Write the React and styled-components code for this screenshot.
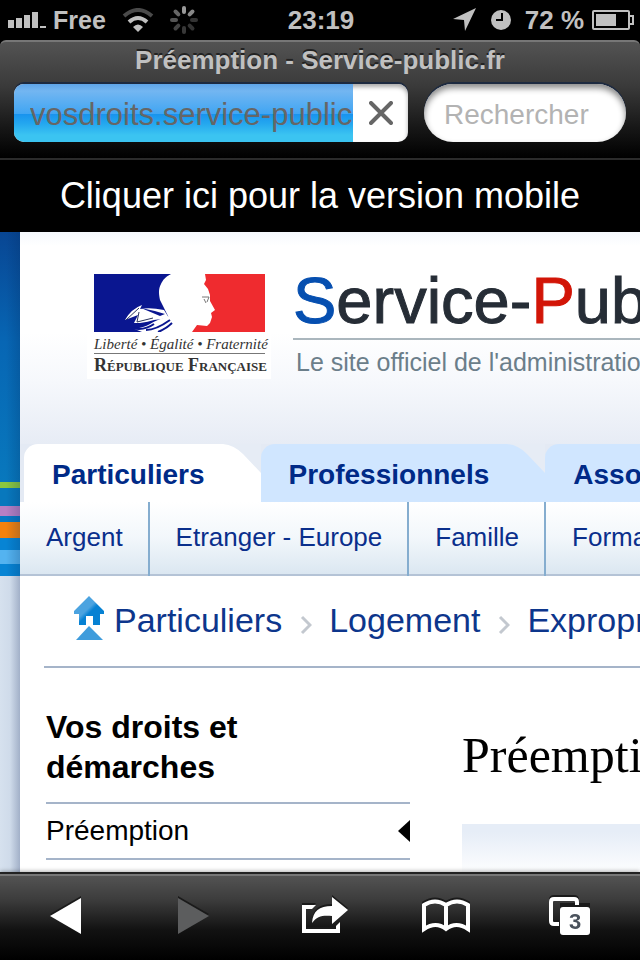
import React from 'react';
import styled, { createGlobalStyle } from 'styled-components';

const sans = '"Liberation Sans", Arial, sans-serif';
const serif = '"Liberation Serif", Georgia, serif';

const GlobalStyle = createGlobalStyle`
  * { box-sizing: border-box; }
  body { margin: 0; background: #000; font-family: ${sans}; }
  a { color: inherit; text-decoration: none; }
  button { border: 0; padding: 0; background: none; font: inherit; cursor: pointer; }
  h1, h2, p { margin: 0; }
  svg { display: block; flex: none; }
`;

const Screen = styled.div`
  display: flex;
  flex-direction: column;
  height: 100vh;
  overflow: hidden;
`;

const StatusBar = styled.div`
  display: grid;
  grid-template-columns: 1fr auto 1fr;
  align-items: center;
  height: 40px;
  flex: none;
  padding: 0 6px 0 8px;
  background: #000;
  color: #c0c0c0;
  font-size: 26px;
  font-weight: bold;
`;

const StatusGroup = styled.div`
  display: flex;
  align-items: center;
  justify-content: ${(p) => (p.$end ? 'flex-end' : 'flex-start')};
  gap: ${(p) => (p.$end ? '8px' : '16px')};
`;

const Carrier = styled.div`
  display: flex;
  align-items: center;
  gap: 6px;
  font-size: 25px;
`;

const Chrome = styled.header`
  flex: none;
  height: 120px;
  border-top: 2px solid #777;
  border-bottom: 2px solid #2b2b2b;
  border-radius: 6px 6px 0 0;
  background: linear-gradient(#535353, #3a3a3a 38%, #161616 75%, #000);
`;

const PageTitle = styled.p`
  height: 42px;
  line-height: 36px;
  text-align: center;
  color: #c0c0c0;
  font-size: 26px;
  font-weight: bold;
  text-shadow: 0 -2px 0 #222;
  white-space: nowrap;
`;

const Fields = styled.div`
  display: flex;
  gap: 16px;
  padding: 0 14px;
`;

const AddressBox = styled.div`
  flex: 2 1 394px;
  display: flex;
  align-items: center;
  min-width: 0;
  height: 58px;
  overflow: hidden;
  border-radius: 10px;
  background: #fff;
  box-shadow: 0 -2px 0 #1d2a40, inset 0 3px 4px #aaa;
`;

const AddressInput = styled.input`
  flex: 1;
  min-width: 0;
  height: 58px;
  padding: 4px 0 0 16px;
  border: 0;
  border-radius: 0;
  outline: 0;
  color: #666;
  font: 31px ${sans};
  background: linear-gradient(#5ea4e8, #73b6f1 12%, #3fa5f3 52%, #1893ee 52%, #24a7ef 68%, #3bc4f1 88%, #3bc4f1);
`;

const StopButton = styled.button`
  display: flex;
  align-items: center;
  justify-content: center;
  width: 55px;
  height: 58px;
`;

const SearchInput = styled.input`
  flex: 1 1 202px;
  min-width: 0;
  height: 58px;
  padding: 4px 20px 0;
  border: 0;
  border-radius: 29px;
  outline: 0;
  background: #fff;
  box-shadow: 0 -2px 0 #1d2a40, inset 0 4px 6px #888;
  font: 28px ${sans};
  &::placeholder { color: #b3b3b3; opacity: 1; }
`;

const MobileBanner = styled.a`
  flex: none;
  height: 72px;
  line-height: 72px;
  background: #000;
  color: #fff !important;
  font-size: 36px;
  text-align: center;
  white-space: nowrap;
`;

const Viewport = styled.div`
  flex: 1;
  min-height: 0;
  display: flex;
  overflow: hidden;
  background: #fff;
`;

const Margin = styled.div`
  flex: none;
  width: 20px;
  display: flex;
  flex-direction: column;
`;

const Stripes = styled.div`
  flex: none;
  height: 344px;
  background:
    linear-gradient(90deg, transparent 30%, rgba(0, 40, 90, 0.22)),
    linear-gradient(
      #084693 0, #0766b4 110px, #0878bd 250px,
      #8cc83f 250px, #8cc83f 256px, #0878bd 256px, #0878bd 274px,
      #b87fc4 274px, #b87fc4 284px, #0878c4 284px, #0878c4 290px,
      #f5820c 290px, #f5820c 306px, #0784d4 306px, #0784d4 318px,
      #54b3f0 318px, #54b3f0 332px, #0784d4 332px
    );
`;

const MarginFoot = styled.div`
  flex: 1;
  background: linear-gradient(90deg, #d6e1ee, #cfdbea 50%, #a2b0c8);
`;

const Site = styled.div`
  flex: 1;
  min-width: 0;
  overflow: hidden;
`;

const SiteHeader = styled.div`
  height: 212px;
  padding: 38px 0 0 67px;
  display: flex;
  align-items: flex-start;
  background: linear-gradient(#f5f8fd, #fff 14px, #fff 100px, #f6f8fc 150px, #e7ecf5 212px);
`;

const Republic = styled.a`
  flex: none;
  width: 184px;
  height: 109px;
  padding: 4px 6px 0 7px;
  background: #fff;
  font-family: ${serif};
  white-space: nowrap;
`;

const Motto = styled.span`
  display: block;
  height: 22px;
  line-height: 24px;
  border-bottom: 1px solid #777;
  color: #333;
  font-size: 15px;
  font-style: italic;
`;

const RepublicName = styled.span`
  display: block;
  line-height: 22px;
  color: #333;
  font-size: 18px;
  font-weight: bold;
  font-variant: small-caps;
`;

const Brand = styled.a`
  flex: none;
  margin-left: 22px;
  white-space: nowrap;
`;

const BrandName = styled.span`
  display: block;
  height: 70px;
  line-height: 62px;
  border-bottom: 2px solid #aab6bd;
  color: #262d36;
  font-size: 65px;
  -webkit-text-stroke: 1px currentColor;
`;

const Initial = styled.span`
  color: ${(p) => p.$color};
`;

const Tagline = styled.span`
  display: block;
  padding-left: 3px;
  line-height: 44px;
  color: #6b7e8a;
  font-size: 25px;
`;

const Tabs = styled.nav`
  display: flex;
  height: 58px;
  padding-left: 4px;
  background: #e4eaf4;
`;

const Tab = styled.a`
  flex: none;
  display: flex;
  height: 58px;
  line-height: 62px;
  padding-left: 28px;
  border-radius: 14px 0 0 0;
  background: ${(p) => (p.$active ? '#fff' : '#d0e6ff')};
  color: #002a87 !important;
  font-size: 28px;
  font-weight: bold;
`;

const TabEdge = styled.svg`
  width: 56px;
  height: 58px;
`;

const SubNav = styled.nav`
  display: flex;
  height: 74px;
  border-bottom: 2px solid #b4c3d6;
  background: linear-gradient(#fff, #f2f7fb 50%, #dbe7f1);
`;

const SubLink = styled.a`
  flex: none;
  height: 74px;
  line-height: 70px;
  padding: 0 25px 0 26px;
  border-right: 2px solid #85adcf;
  color: #0a2f8c !important;
  font-size: 26px;
  white-space: nowrap;
`;

const Breadcrumb = styled.nav`
  display: flex;
  align-items: center;
  height: 92px;
  margin-left: 24px;
  padding: 0 0 2px 30px;
  border-bottom: 2px solid #a5b4c9;
  color: #0d368c;
  font-size: 34px;
  white-space: nowrap;
`;

const Crumb = styled.a`
  flex: none;
  padding-left: ${(p) => (p.$first ? '9px' : '0')};
`;

const Chevron = styled.svg`
  margin: 10px 17px 0 18px;
  width: 12px;
  height: 20px;
`;

const HomeIcon = styled.svg`
  align-self: flex-start;
  margin-top: 20px;
`;

const Columns = styled.div`
  display: flex;
  padding-left: 26px;
`;

const Sidebar = styled.aside`
  flex: none;
  width: 364px;
  padding-top: 39px;
`;

const SideTitle = styled.h2`
  width: 240px;
  padding-bottom: 15px;
  line-height: 40px;
  font-size: 32px;
`;

const SideItem = styled.a`
  display: flex;
  align-items: center;
  justify-content: space-between;
  height: 56px;
  border-top: 2px solid #a5b4c9;
  font-size: 28px;
`;

const SideEnd = styled.div`
  border-top: 2px solid #a5b4c9;
`;

const Article = styled.main`
  flex: 1;
  min-width: 0;
  margin-left: 52px;
  padding-top: 58px;
  overflow: hidden;
`;

const ArticleTitle = styled.h1`
  height: 98px;
  line-height: 58px;
  font-family: ${serif};
  font-size: 50px;
  font-weight: normal;
  white-space: nowrap;
`;

const Summary = styled.div`
  height: 80px;
  background: linear-gradient(#e6edf7 8px, #fff 52px);
`;

const Toolbar = styled.footer`
  flex: none;
  display: grid;
  grid-template-columns: 129fr 129fr 134fr 108fr 140fr;
  align-items: center;
  justify-items: center;
  height: 88px;
  padding-bottom: 2px;
  border-top: 2px solid #222;
  background: linear-gradient(#777 2px, #535353 2px, #3c3c3c 30%, #121212 65%, #000);
  box-shadow: 0 -1px 4px rgba(0, 0, 0, 0.3);
  z-index: 1;
`;

const ToolButton = styled.button`
  display: flex;
  filter: drop-shadow(0 -2px 0 #1a1a1a);
`;

const PagesBadge = styled.text`
  font: bold 22px ${sans};
  fill: #4a525c;
`;

const tabs = ['Particuliers', 'Professionnels', 'Associations'];
const themes = ['Argent', 'Etranger - Europe', 'Famille', 'Formation - Travail'];
const crumbs = ['Particuliers', 'Logement', 'Expropriation'];

function Signal() {
  return (
    <svg width="39" height="18" fill="#c0c0c0" aria-hidden="true">
      <rect x="0" y="9" width="6" height="8" />
      <rect x="8" y="7" width="6" height="10" />
      <rect x="16" y="4" width="6" height="13" />
      <rect x="24" y="1" width="6" height="16" />
      <rect x="32" y="15" width="6" height="2" />
    </svg>
  );
}

function Wifi() {
  return (
    <svg width="32" height="24" viewBox="0 0 32 24" fill="none" aria-hidden="true">
      <path d="M2 8Q16 -4 30 8" stroke="#4a4a4a" strokeWidth="4" />
      <path d="M7 14Q16 6 25 14" stroke="#c0c0c0" strokeWidth="4" />
      <path d="M11 19Q16 14 21 19L16 24Z" fill="#c0c0c0" />
    </svg>
  );
}

function Spinner() {
  const shades = ['#999', '#888', '#333', '#333', '#383838', '#444', '#555', '#666'];
  return (
    <svg width="28" height="28" viewBox="-14 -14 28 28" aria-label="Chargement">
      {shades.map((c, i) => (
        <line key={i} x1="0" y1="-8" x2="0" y2="-12" stroke={c} strokeWidth="4" strokeLinecap="round" transform={`rotate(${i * 45})`} />
      ))}
    </svg>
  );
}

function Marianne() {
  return (
    <svg width="171" height="58" viewBox="0 0 171 58" aria-label="Marianne">
      <rect width="171" height="58" fill="#fff" />
      <path d="M0 0H77C71 3 69 6 67 10C64 15 65 21 66 26L70 34L73 40L78 50L72 58H0Z" fill="#0a1690" />
      <path d="M111 0L112 6L110 10L114 15L116 21L116 27L121 36L117 39L118 43L116 49L113 52L103 51L98 58H171V0Z" fill="#ef2b2f" />
      <path d="M31 46Q37 35 48 31L46 35Q56 33 70 36L75 44L60 46Q54 48 46 49L40 49L44 41Z" fill="#fff" />
      <path d="M47 34L66 42L71 40Q58 36 47 34Z" fill="#0a1690" />
      <path d="M32 46L45 34M45 38L43 48L59 44" fill="none" stroke="#29335c" strokeWidth="1" />
      <path d="M38 54Q48 55 56 50T76 42L80 58H48Z" fill="#fff" />
      <path d="M38 54Q50 57 60 50M52 56Q62 56 76 46M64 58Q72 55 78 49" fill="none" stroke="#0a1690" strokeWidth="2" />
      <path d="M108 23H115L113 28M110 25L112 29" fill="none" stroke="#777" strokeWidth="1" />
    </svg>
  );
}

function Home() {
  return (
    <HomeIcon width="31" height="44" viewBox="0 0 31 44" aria-hidden="true">
      <defs>
        <linearGradient id="roof" x1="0" y1="0" x2="1" y2="1">
          <stop offset="45%" stopColor="#4ba3e0" />
          <stop offset="55%" stopColor="#0681d3" />
        </linearGradient>
      </defs>
      <path d="M15 0L30 15V18H26V29H19V20H12V29H5V18H0V15Z" fill="url(#roof)" />
      <path d="M15 30L29 44H2Z" fill="#3f9cdc" />
    </HomeIcon>
  );
}

export default function App() {
  return (
    <Screen>
      <GlobalStyle />
      <StatusBar>
        <StatusGroup>
          <Carrier><Signal />Free</Carrier>
          <Wifi />
          <Spinner />
        </StatusGroup>
        <span>23:19</span>
        <StatusGroup $end>
          <svg width="24" height="24" viewBox="0 0 24 24" fill="#c0c0c0" aria-hidden="true"><path d="M23 0L12 23L11 12L0 11Z" /></svg>
          <svg width="32" height="20" viewBox="-6 0 32 20" aria-hidden="true">
            <circle cx="10" cy="10" r="10" fill="#c0c0c0" />
            <path d="M11 3V10H5" fill="none" stroke="#000" strokeWidth="2" />
          </svg>
          <span>72 %</span>
          <svg width="42" height="20" viewBox="0 0 42 20" fill="none" stroke="#c0c0c0" strokeWidth="2" aria-label="Batterie">
            <rect x="1" y="1" width="36" height="18" rx="1" />
            <path d="M38 6H41V14H38" />
            <rect x="4" y="4" width="20" height="12" fill="#c0c0c0" stroke="none" />
          </svg>
        </StatusGroup>
      </StatusBar>

      <Chrome>
        <PageTitle>Préemption - Service-public.fr</PageTitle>
        <Fields>
          <AddressBox>
            <AddressInput aria-label="Adresse" defaultValue="vosdroits.service-public.fr" />
            <StopButton aria-label="Arrêter">
              <svg width="24" height="24" viewBox="0 0 24 24" stroke="#666" strokeWidth="4" strokeLinecap="round"><path d="M2 2L22 22M22 2L2 22" /></svg>
            </StopButton>
          </AddressBox>
          <SearchInput aria-label="Rechercher" placeholder="Rechercher" />
        </Fields>
      </Chrome>

      <MobileBanner href="#mobile">Cliquer ici pour la version mobile</MobileBanner>

      <Viewport>
        <Margin><Stripes /><MarginFoot /></Margin>
        <Site>
          <SiteHeader>
            <Republic href="#republique">
              <Marianne />
              <Motto>Liberté • Égalité • Fraternité</Motto>
              <RepublicName>République Française</RepublicName>
            </Republic>
            <Brand href="#accueil">
              <BrandName><Initial $color="#064fb0">S</Initial>ervice-<Initial $color="#d21507">P</Initial>ublic.fr</BrandName>
              <Tagline>Le site officiel de l'administration française</Tagline>
            </Brand>
          </SiteHeader>
          <Tabs aria-label="Publics">
            {tabs.map((name, i) => (
              <Tab key={name} href={`#${name}`} $active={i === 0}>
                {name}
                <TabEdge viewBox="0 0 56 58" aria-hidden="true"><path d="M18 0H57V30L38 10Q29 1 18 0Z" fill="#e6ecf5" /></TabEdge>
              </Tab>
            ))}
          </Tabs>
          <SubNav aria-label="Thèmes">
            {themes.map((name) => <SubLink key={name} href={`#${name}`}>{name}</SubLink>)}
          </SubNav>
          <Breadcrumb aria-label="Fil d'Ariane">
            <Home />
            {crumbs.map((name, i) => (
              <React.Fragment key={name}>
                {i > 0 && <Chevron viewBox="0 0 12 20" fill="none" stroke="#c3c8cf" strokeWidth="3"><path d="M2 2L10 10L2 18" /></Chevron>}
                <Crumb href={`#${name}`} $first={i === 0}>{name}</Crumb>
              </React.Fragment>
            ))}
          </Breadcrumb>
          <Columns>
            <Sidebar>
              <SideTitle>Vos droits et démarches</SideTitle>
              <SideItem href="#preemption">
                Préemption
                <svg width="12" height="22" viewBox="0 0 12 22" aria-hidden="true"><path d="M12 0V22L0 11Z" /></svg>
              </SideItem>
              <SideEnd />
            </Sidebar>
            <Article>
              <ArticleTitle>Préemption</ArticleTitle>
              <Summary />
            </Article>
          </Columns>
        </Site>
      </Viewport>

      <Toolbar>
        <ToolButton aria-label="Précédent">
          <svg width="32" height="38" viewBox="0 0 32 38"><path d="M32 1V37L1 19Z" fill="#fff" /></svg>
        </ToolButton>
        <ToolButton aria-label="Suivant" disabled>
          <svg width="32" height="38" viewBox="0 0 32 38"><path d="M0 1V37L31 19Z" fill="#5c5d5e" /></svg>
        </ToolButton>
        <ToolButton aria-label="Partager">
          <svg width="46" height="38" viewBox="0 0 46 38">
            <path d="M14 8L10 12H4V32H34V29L38 25V36H0V8Z" fill="#fff" />
            <path d="M10 26C11 14 17 9 30 9V0L46 13L30 27V19C21 18 15 19 10 26Z" fill="#fff" />
          </svg>
        </ToolButton>
        <ToolButton aria-label="Signets">
          <svg width="48" height="34" viewBox="0 0 48 34" fill="none" stroke="#fff" strokeWidth="4">
            <path d="M2 30V6Q13 -1 24 6Q35 -1 46 6V30Q34 22 24 30Q14 22 2 30ZM24 6V30" />
          </svg>
        </ToolButton>
        <ToolButton aria-label="Pages ouvertes">
          <svg width="42" height="40" viewBox="0 0 42 40">
            <path d="M10 28H5Q2 28 2 25V6Q2 3 5 3H25Q28 3 28 6V10" fill="none" stroke="#fff" strokeWidth="4" />
            <rect x="11" y="9" width="30" height="2" fill="#1a1a1a" />
            <rect x="11" y="11" width="30" height="28" rx="3" fill="#fff" />
            <PagesBadge x="26" y="33" textAnchor="middle">3</PagesBadge>
          </svg>
        </ToolButton>
      </Toolbar>
    </Screen>
  );
}
